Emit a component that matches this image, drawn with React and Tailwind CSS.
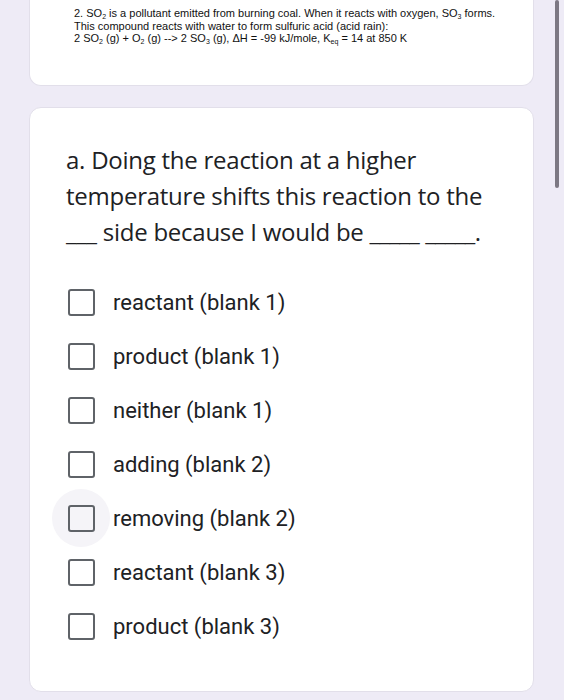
import React from "react";

const options = [
  "reactant (blank 1)",
  "product (blank 1)",
  "neither (blank 1)",
  "adding (blank 2)",
  "removing (blank 2)",
  "reactant (blank 3)",
  "product (blank 3)",
];

export default function App() {
  return (
    <div className="relative w-[564px] h-[700px] overflow-hidden bg-[#eeebf6]">
      <div className="flex flex-col gap-[21px] pl-[29px] pr-[30px]">
        <div className="h-[86px] bg-white rounded-b-[12px] border border-t-0 border-[#e2dfea] pt-[7px] pl-[44px] text-[11px] leading-[12.6px] text-[#111] font-['Liberation_Sans',Arial,sans-serif]">
          <div>
            2. SO<sub className="text-[7px]">2</sub> is a pollutant emitted from burning coal. When it reacts with oxygen, SO<sub className="text-[7px]">3</sub> forms.
          </div>
          <div>This compound reacts with water to form sulfuric acid (acid rain):</div>
          <div>
            2 SO<sub className="text-[7px]">2</sub> (g) + O<sub className="text-[7px]">2</sub> (g) --&gt; 2 SO<sub className="text-[7px]">3</sub> (g), ΔH = -99 kJ/mole, K<sub className="text-[7px]">eq</sub> = 14 at 850 K
          </div>
        </div>
        <div className="h-[585px] bg-white rounded-[12px] border border-[#e2dfea] pt-[34px] pl-[36px]">
          <div className="text-[24px] leading-[36px] text-[#202124] font-['Open_Sans',sans-serif] tracking-[-0.25px]">
            <div>a. Doing the reaction at a higher</div>
            <div>temperature shifts this reaction to the</div>
            <div>
              ___ side because I would be <span className="tracking-[-0.6px]">_____</span>{" "}
              <span className="tracking-[-0.6px]">_____</span>.
            </div>
          </div>
          <div className="mt-[25px] flex flex-col">
            {options.map((o, i) => (
              <div key={o} className="h-[54px] flex items-center">
                <div className="relative w-[30px] h-[30px] flex items-center justify-center">
                  {i === 4 && (
                    <div className="absolute w-[58px] h-[58px] rounded-full bg-[#f5f4f8] left-[-14px] top-[-14px]" />
                  )}
                  <div className="relative w-[27px] h-[27px] rounded-[3px] border-2 border-[#5f6368]" />
                </div>
                <span className="ml-[17px] text-[22px] text-[#202124] font-['Roboto',sans-serif]">{o}</span>
              </div>
            ))}
          </div>
        </div>
      </div>
      <div className="absolute left-[555px] top-0 w-[4px] h-[188px] rounded-full bg-[#7c7883]" />
    </div>
  );
}
